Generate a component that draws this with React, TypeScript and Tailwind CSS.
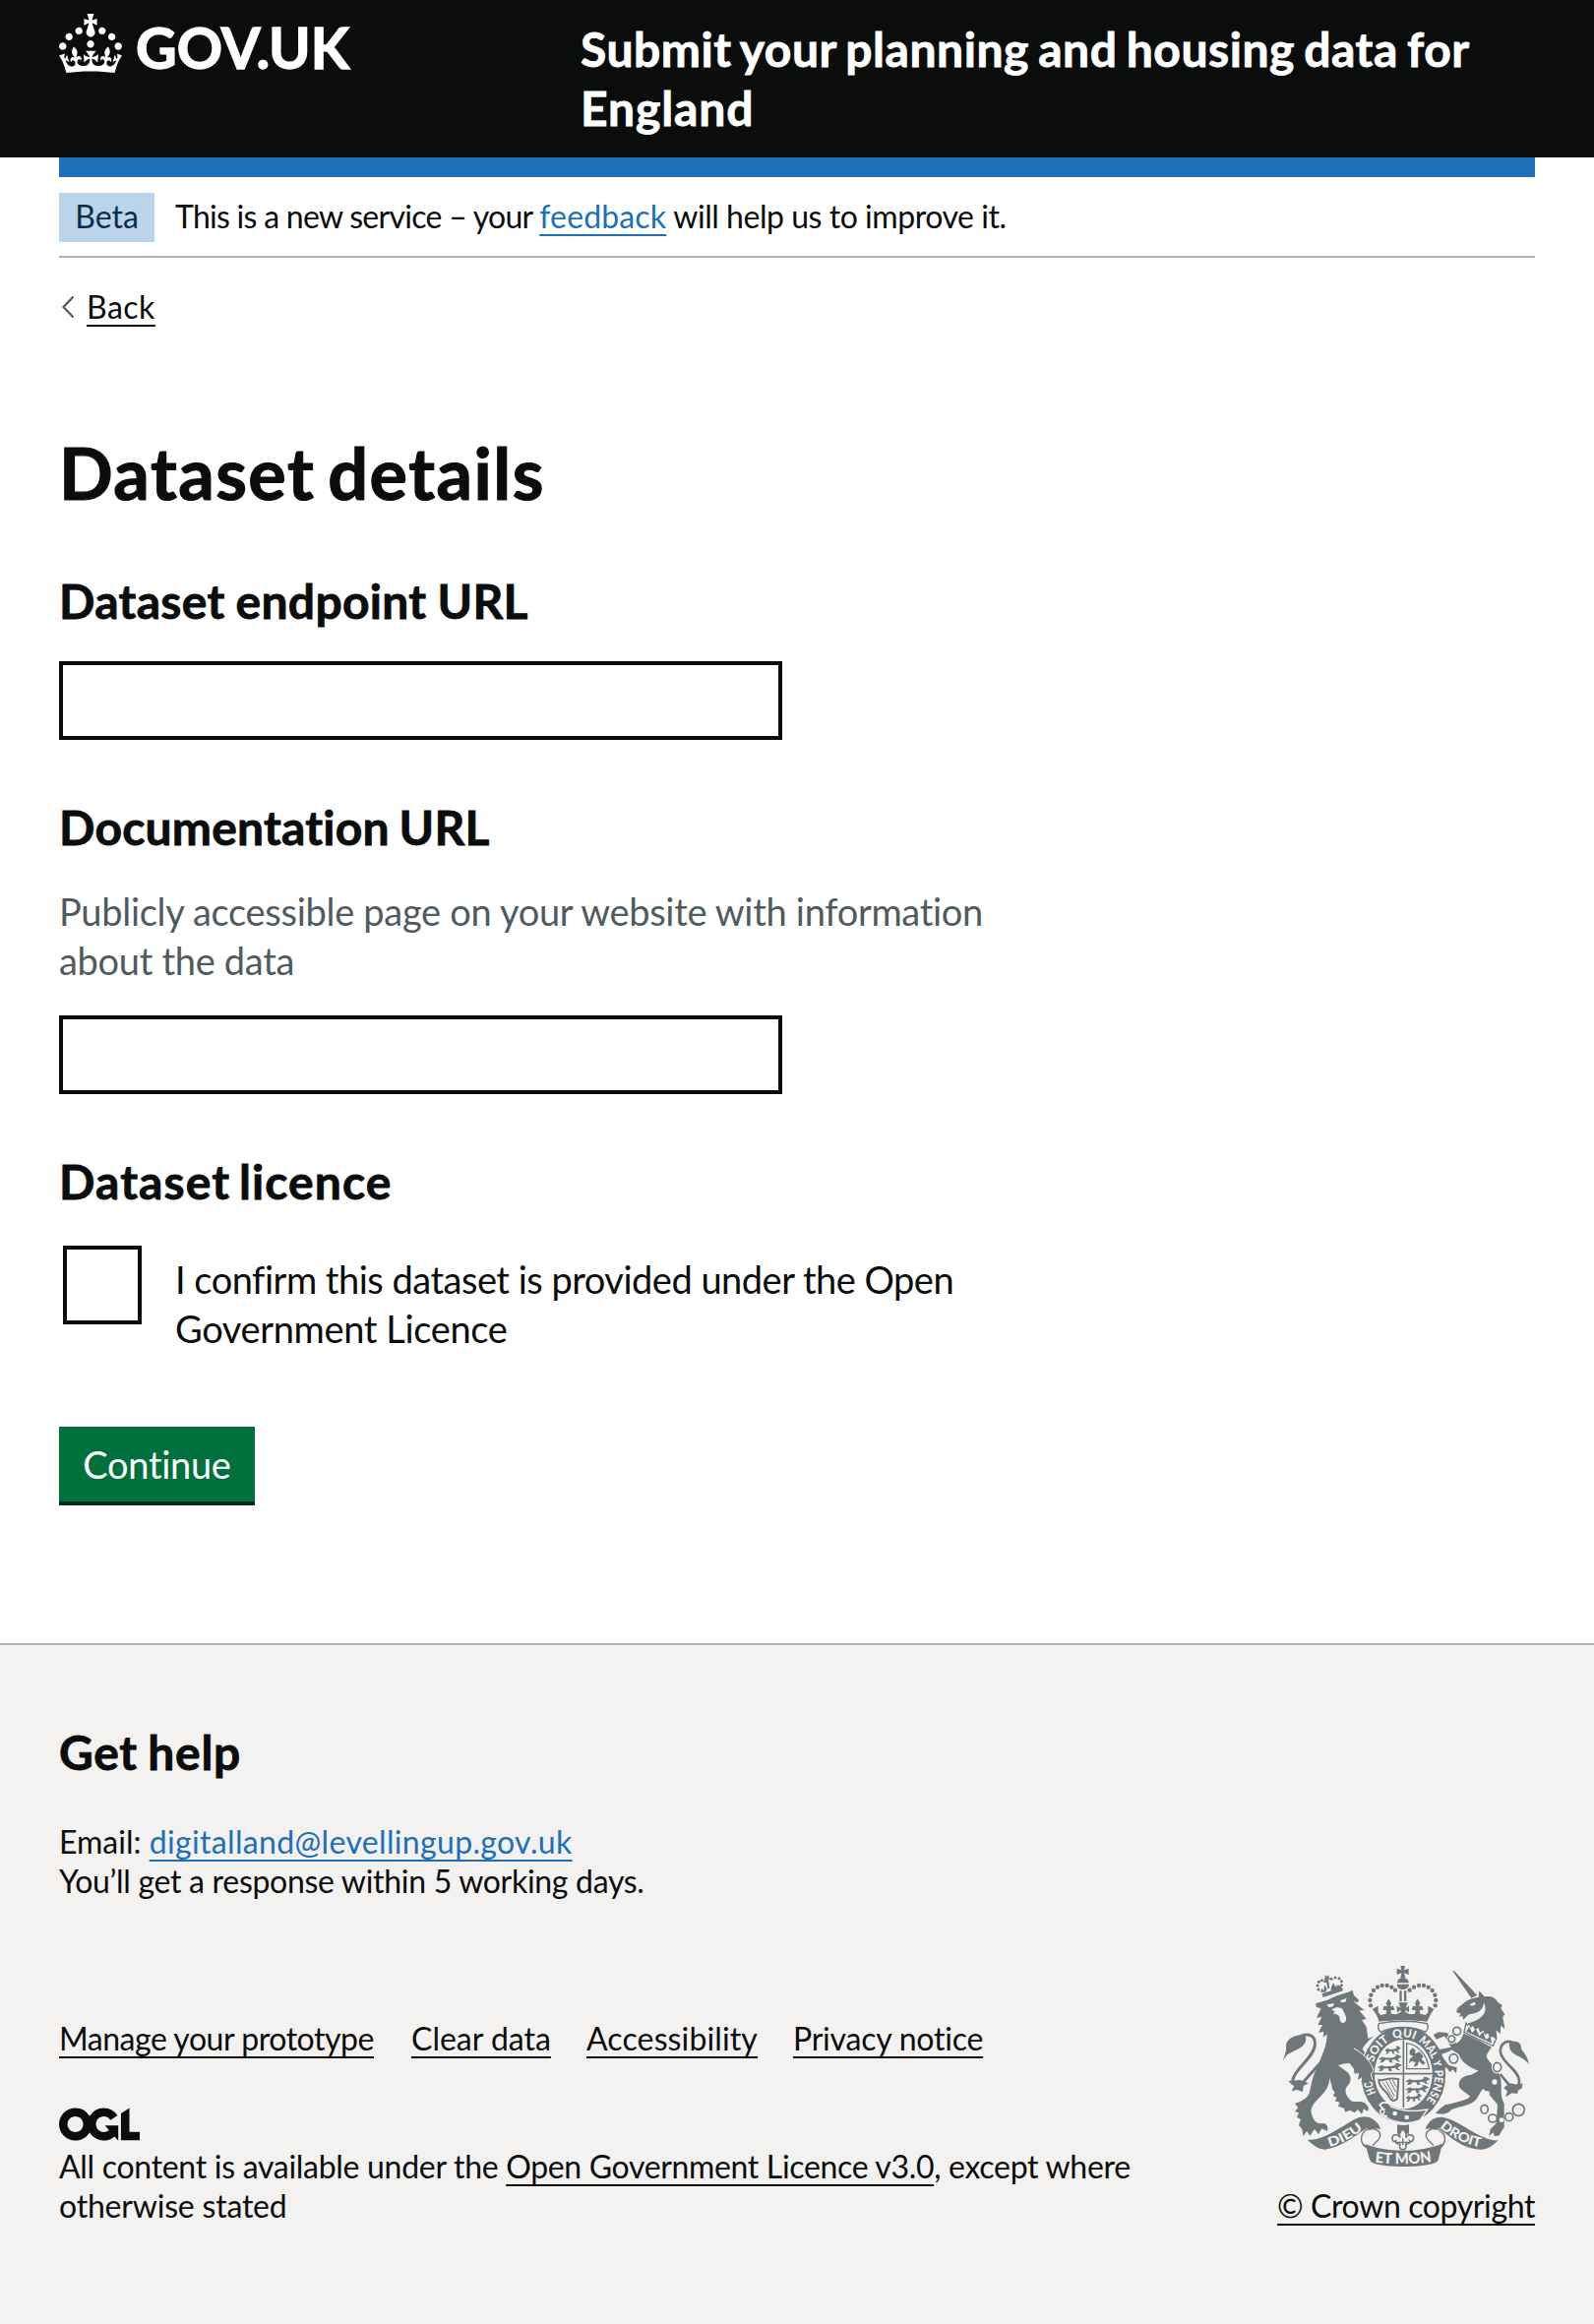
import type { ReactNode } from "react";

const BACKGROUND = "#f3f2f1";
const CREST = "#6f777b";

function Crown() {
  return (
    <svg viewBox="0 0 32 30" width="64" height="60" fill="currentColor" aria-hidden="true">
      <path d="M22.6 10.4c-1 .4-2-.1-2.4-1-.4-.9.1-2 1-2.4.9-.4 2 .1 2.4 1s-.1 2-1 2.4m-5.9 6.7c-.9.4-2-.1-2.4-1-.4-.9.1-2 1-2.4.9-.4 2 .1 2.4 1s-.1 2-1 2.4m10.8-3.7c-1 .4-2-.1-2.4-1-.4-.9.1-2 1-2.4.9-.4 2 .1 2.4 1s0 2-1 2.4m3.3 4.8c-1 .4-2-.1-2.4-1-.4-.9.1-2 1-2.4.9-.4 2 .1 2.4 1s-.1 2-1 2.4M17 4.7l2.3 1.2V2.5l-2.3.7-.2-.2.9-3h-3.4l.9 3-.2.2c-.1.1-2.3-.7-2.3-.7v3.4L15 4.7c.1.1.1.2.2.2l-1.3 4c-.1.2-.1.4-.1.6 0 1.1.8 2 1.9 2.2h.7c1-.2 1.9-1.1 1.9-2.1 0-.2 0-.4-.1-.6l-1.3-4c-.1-.2 0-.2.1-.3m-7.6 5.7c.9.4 2-.1 2.4-1 .4-.9-.1-2-1-2.4-.9-.4-2 .1-2.4 1s0 2 1 2.4m-5 3c.9.4 2-.1 2.4-1 .4-.9-.1-2-1-2.4-.9-.4-2 .1-2.4 1s.1 2 1 2.4m-3.2 4.8c.9.4 2-.1 2.4-1 .4-.9-.1-2-1-2.4-.9-.4-2 .1-2.4 1s0 2 1 2.4m14.8 11c4.4 0 8.6.3 12.3.8 1.1-4.5 2.4-7 3.7-8.8l-2.5-.9c.2 1.3.3 1.9 0 2.7-.4-.4-.8-1.1-1.1-2.3l-1.2 4c.7-.5 1.3-.8 2-.9-1.1 2.5-2.6 3.1-3.5 3-1.1-.2-1.7-1.2-1.5-2.1.3-1.2 1.5-1.5 2.1-.1 1.1-2.3-.8-3-2-2.3 1.9-1.9 2.1-3.5.6-5.6-2.1 1.6-2.1 3.2-1.2 5.5-1.2-1.4-3.2-.6-2.5 1.6.9-1.4 2.1-.5 1.9.8-.2 1.1-1.7 2.1-3.5 1.9-2.7-.2-2.9-2.1-2.9-3.6.7-.1 1.9.5 2.9 1.9l.4-4.3c-1.1 1.1-2.1 1.4-3.2 1.4.4-1.2 2.1-3 2.1-3h-5.4s1.7 1.9 2.1 3c-1.1 0-2.1-.2-3.2-1.4l.4 4.3c1-1.4 2.2-2 2.9-1.9-.1 1.5-.2 3.4-2.9 3.6-1.9.2-3.4-.8-3.5-1.9-.2-1.3 1-2.2 1.9-.8.7-2.3-1.2-3-2.5-1.6.9-2.2.9-3.9-1.2-5.5-1.5 2-1.3 3.7.6 5.6-1.2-.7-3.1 0-2 2.3.6-1.4 1.8-1.1 2.1.1.2.9-.3 1.9-1.5 2.1-.9.2-2.4-.5-3.5-3 .6 0 1.2.3 2 .9l-1.2-4c-.3 1.1-.7 1.9-1.1 2.3-.3-.8-.2-1.4 0-2.7l-2.9.9C1.3 23 2.6 25.5 3.7 30c3.7-.5 7.9-.8 12.3-.8" />
    </svg>
  );
}

function Wordmark() {
  return (
    <svg width="236" height="84" className="-mt-3 ml-2 overflow-visible" fill="currentColor">
      <text
        x="6"
        y="68"
        fontSize="58"
        fontWeight="700"
        textLength="217"
        lengthAdjust="spacingAndGlyphs"
        stroke="currentColor"
        strokeWidth="1.4"
      >
        GOV.UK
      </text>
    </svg>
  );
}

function LicenceMark() {
  return (
    <svg viewBox="0 0 483.2 195.7" width="82" height="34" fill="currentColor" aria-hidden="true">
      <path d="M421.5 142.8V.1l-50.7 32.3v161.1h112.4v-50.7zm-122.3-9.6A47.12 47.12 0 0 1 221 97.8c0-26 21.1-47.1 47.1-47.1 16.7 0 31.4 8.7 39.7 21.8l42.7-27.2A97.63 97.63 0 0 0 268.1 0c-36.5 0-68.3 20.1-85.1 49.7A98 98 0 0 0 97.8 0C43.9 0 0 43.9 0 97.8s43.9 97.8 97.8 97.8c36.5 0 68.3-20.1 85.1-49.7a97.76 97.76 0 0 0 149.6 25.4l19.4 22.2h3v-87.8h-80l24.3 27.5zM97.8 145c-26 0-47.1-21.1-47.1-47.1s21.1-47.1 47.1-47.1 47.1 21.1 47.1 47.1S123.8 145 97.8 145" />
    </svg>
  );
}

const crownPearls: [number, number][] = [
  [339, 175], [337, 159], [340, 143], [348, 129], [360, 119], [374, 114], [389, 114], [403, 119], [414, 128],
  [458, 128], [471, 119], [486, 114], [501, 114], [515, 119], [527, 129], [535, 143], [538, 159], [536, 175],
];

const lionPearls: [number, number][] = [
  [180, 126], [177, 114], [181, 103], [190, 98], [200, 101], [219, 94], [231, 90], [243, 92], [250, 101], [250, 113],
];

const chainRings: [number, number, number, number][] = [
  [602, 253, 12, 12], [586, 277, 10, 10], [592, 337, 13, 14], [725, 363, 12, 14],
  [686, 491, 11, 13], [711, 519, 13, 12], [761, 515, 12, 12], [790, 493, 18, 18],
];

/* Word, distance along the garter, length along the garter. */
const garterWords: [string, number, number][] = [
  ["HO", 22, 40], ["SOIT", 116, 84], ["QUI", 214, 66], ["MAL", 292, 70], ["Y", 368, 20], ["PENSE", 396, 98],
];

/* A passant lion, three of which fill an English quarter. */
const LION_PASSANT =
  "M0 5l6-4 6 3 14-1 6-4-2-4 6 1 7 5-5 3-3 4 5 6-6-1-4-5-7 1 2 7-6-1-1-6-7 0-4 6-6 1 3-7-5-1z";

function RoyalArms() {
  return (
    <svg viewBox="72 54 750 612" width="250" height="204" fill={CREST} aria-hidden="true">
      {/* Lion's tail */}
      <path d="M72 344C78 318 84 312 81 300C80 282 96 270 117 266C138 262 146 270 140 286C134 304 108 312 90 322C80 328 76 336 72 344Z" />
      <path d="M126 268C152 258 172 268 169 296C165 334 108 368 102 400C100 416 114 424 132 410L184 352" fill="none" stroke={CREST} strokeWidth="9" />
      <path d="M100 404L88 404L96 414L106 420L98 436L114 432L132 438L134 420L150 412L124 402Z" />
      {/* Lion's body */}
      <path d="M171 169L207 158L245 140L284 129L288 144L303 158L300 166L286 162L320 190L304 190L326 216L312 219L326 240C328 256 330 262 331 276L350 268C330 284 320 296 314 308C330 330 346 352 348 372L338 384L344 400L330 408L312 404L318 388L304 400L308 376L296 384L298 362L286 366L274 350C262 352 250 352 240 358L268 378C282 392 280 408 268 420C258 432 262 450 278 464C292 474 306 462 320 472C330 478 336 488 330 498L318 490L312 506L300 492L290 502L276 494L262 500L258 488L240 482L244 470L230 466L236 456L224 450L230 440L222 430C222 416 214 404 214 392C214 424 198 440 180 458C164 474 156 486 158 502C164 528 176 538 192 534C204 534 212 544 206 558L190 550L180 568L168 552L154 572L144 558L134 574L130 552L120 540L126 522L114 516L120 502L108 498L118 486L108 474C128 468 146 458 152 442C158 420 160 396 172 372C184 340 206 304 206 262L194 272L196 254L180 258L192 234L178 234L190 210L174 212L188 184L174 180Z" />
      <g fill={BACKGROUND}>
        <path d="M205 172L228 168L224 178L212 181ZM246 160L266 152L262 164L250 166Z" />
        <path d="M220 187L236 180L252 184L258 196L264 210C266 222 260 229 254 228C246 227 244 218 244 208L232 200L224 202L230 194Z" />
      </g>
      <path d="M186 158L276 130" stroke={BACKGROUND} strokeWidth="4" />
      {/* Crown on the lion */}
      <path d="M190 139L252 120L255 130L194 150ZM200 82L206 86L213 82L211 89L216 92L210 96L214 122L208 124L203 98L196 96L200 90ZM186 134L190 122L196 130L198 112L206 124L202 134ZM217 130L220 116L225 106L232 118L240 112L248 118L250 122Z" />
      {lionPearls.map(([x, y]) => (
        <circle key={`${x}-${y}`} cx={x} cy={y} r="4.5" />
      ))}

      {/* Royal crown */}
      <path d="M430 54H444L441 67L455 62V81L441 76L445 90H430L433 76L419 81V62L433 67Z" />
      <path d="M419 106C422 92 432 90 437 90C443 90 453 92 456 106ZM419 110H456C456 122 444 126 437 126C430 126 419 122 419 110Z" />
      <path d="M427 130H434V162H427ZM441 130H448V162H441Z" />
      {crownPearls.map(([x, y]) => (
        <circle key={`${x}-${y}`} cx={x} cy={y} r="6.5" />
      ))}
      <path d="M344 186L362 176L362 196L370 204L386 200L388 190L376 188L380 176L390 178L386 168L394 154L402 168L398 178L408 176L412 188L400 190L402 200L416 202L430 196L432 188L420 196L418 176L430 182L424 166H452L446 182L456 176L456 196L444 188L446 196L460 202L474 200L476 190L464 188L468 176L478 178L474 168L482 154L490 168L486 178L496 176L500 188L488 190L490 200L506 204L514 196L514 176L532 186C522 200 516 214 511 224C470 218 408 218 365 224C360 210 356 200 344 186Z" />

      {/* Garter */}
      <ellipse cx="439" cy="385" rx="108" ry="126" fill="none" stroke={BACKGROUND} strokeWidth="48" />
      <ellipse cx="439" cy="385" rx="108" ry="126" fill="none" stroke={CREST} strokeWidth="41" />
      <path d="M364 230C410 221 466 221 511 230C516 240 512 250 506 256C466 236 410 236 370 256C363 250 360 240 364 230Z" fill={BACKGROUND} stroke={CREST} strokeWidth="4" />
      <defs>
        <path id="garter" d="M366 460A96 114 0 1 1 492 480" />
        <path id="scroll-left" d="M214 606Q268 592 322 546" />
        <path id="scroll-middle" d="M350 653Q438 664 526 651" />
        <path id="scroll-right" d="M548 544Q606 596 676 607" />
      </defs>
      <g fill={BACKGROUND} fontWeight="900" fontSize="36">
        {garterWords.map(([word, offset, length]) => (
          <text key={word}>
            <textPath href="#garter" startOffset={offset} textLength={length} lengthAdjust="spacingAndGlyphs">
              {word}
            </textPath>
          </text>
        ))}
      </g>
      <path d="M366 478C378 466 394 468 402 484C442 500 480 498 512 492L490 524C450 542 402 530 374 508C382 502 384 496 376 490Z" stroke={BACKGROUND} strokeWidth="4" />
      <path d="M392 472C368 466 362 480 378 490C362 492 366 512 390 512" fill="none" stroke={BACKGROUND} strokeWidth="5" />
      <circle cx="413" cy="504" r="7" fill={BACKGROUND} />
      <circle cx="449" cy="516" r="7" fill={BACKGROUND} />
      {/* Lion's forearm over the garter */}
      <path d="M288 306C312 316 344 350 348 374L340 384L345 402L330 412L310 408L316 390L300 402L304 376L290 384L284 340Z" />
      <path d="M288 306C312 316 344 350 348 374L340 384L345 402" fill="none" stroke={BACKGROUND} strokeWidth="3" />

      {/* Shield */}
      <ellipse cx="439" cy="382" rx="88" ry="103" fill={BACKGROUND} />
      <path d="M439 280V486M350 383H528" stroke={CREST} strokeWidth="5" />
      <path d="M449 368V290C484 294 512 326 517 368Z" fill="none" stroke={CREST} strokeWidth="4" />
      <path d="M458 312L468 304L476 312L474 322L488 316L500 330L494 338L506 350L498 356L486 344L482 358L470 362L476 348L464 344L456 352L458 338L468 330L458 324Z" />
      <g>
        <path d={LION_PASSANT} transform="translate(384 304) scale(1.1 1.2)" />
        <path d={LION_PASSANT} transform="translate(366 330) scale(1.6 1.2)" />
        <path d={LION_PASSANT} transform="translate(362 356) scale(1.7 1.2)" />
        <path d={LION_PASSANT} transform="translate(448 398) scale(1.7 1.2)" />
        <path d={LION_PASSANT} transform="translate(448 423) scale(1.6 1.2)" />
        <path d={LION_PASSANT} transform="translate(448 449) scale(1.1 1.2)" />
      </g>
      <path d="M364 402C380 406 390 392 424 400L420 458C412 470 402 466 396 454C388 432 364 430 364 402Z" fill="none" stroke={CREST} strokeWidth="6" />
      <path d="M376 408L408 460M386 406L412 452M396 402L416 438M406 402L418 424" stroke={CREST} strokeWidth="3" />

      {/* Unicorn's tail */}
      <path d="M762 288C784 278 800 290 798 306C806 320 816 326 822 354C806 334 790 332 776 322C764 314 760 300 762 288Z" />
      <path d="M776 290C752 276 732 294 735 318C740 352 790 370 792 404C792 424 774 428 762 418L734 384" fill="none" stroke={CREST} strokeWidth="8" />
      <path d="M786 416L802 412L800 428L790 432L786 444L770 442L750 454L756 436L744 426L764 412Z" />
      {/* Unicorn */}
      <path d="M588 68L596 71L664 144L646 152Z" />
      <path d="M601 196C600 186 608 178 618 172C630 160 646 152 668 150L670 130L686 148C704 144 720 150 726 164L740 174L736 184L748 202L742 210L748 246L736 236L734 262L722 250L724 276C700 266 660 246 636 230C650 222 660 210 664 196C652 202 640 198 632 208L622 218L618 206L608 210L614 200Z" />
      <path d="M664 196C676 190 684 178 684 166C694 186 688 204 668 216C654 224 642 228 636 230C652 220 660 208 664 196ZM640 172L656 164L660 172L648 176Z" fill={BACKGROUND} />
      <path d="M630 228L634 234L640 230L644 240L652 234L658 246L668 240L674 254L684 248L688 262L698 256L702 270L712 268L722 276L712 298C684 284 648 270 624 256Z" fill={BACKGROUND} stroke={CREST} strokeWidth="4" />
      <path d="M630 254L640 240L648 258L660 246L670 268L682 256L690 278L704 270L708 290Z" />
      <path d="M622 260C652 272 684 288 708 302C702 312 694 318 692 330C700 352 726 366 734 392C742 424 730 446 746 474V546L730 572L716 572L712 562L700 574L704 552L722 534L726 478C712 456 694 442 682 428C666 446 668 466 634 478C608 486 586 488 578 500L560 506L536 504L550 490L566 478C600 470 632 464 642 452C632 440 610 434 608 418C608 398 622 388 646 386L668 374C640 364 616 348 608 324L586 310C578 318 560 320 552 326L566 342L576 356L602 364L600 382L590 370L580 378L572 366L558 360L548 336C534 330 538 314 552 308L584 302L564 268L540 278L530 264L546 256L572 258L588 276L600 290C610 286 618 274 622 260Z" />
      <g fill="none" stroke={BACKGROUND} strokeWidth="11">
        {chainRings.slice(0, 4).map(([cx, cy, rx, ry]) => (
          <ellipse key={`${cx}-${cy}`} cx={cx} cy={cy} rx={rx} ry={ry} />
        ))}
      </g>
      <g fill={BACKGROUND} stroke={CREST} strokeWidth="5">
        {chainRings.map(([cx, cy, rx, ry]) => (
          <ellipse key={`${cx}-${cy}`} cx={cx} cy={cy} rx={rx} ry={ry} />
        ))}
      </g>
      <g fill={BACKGROUND}>
        <circle cx="717" cy="408" r="8" />
        <circle cx="694" cy="443" r="8" />
        <circle cx="738" cy="524" r="7" />
      </g>

      {/* Badge below the garter */}
      <path d="M420 538C432 541 446 541 456 538V566H420Z" />
      <path d="M437 550C446 562 450 568 446 578C452 566 470 566 470 580C470 588 462 592 458 588C460 598 448 594 446 598C450 612 442 614 437 614C432 614 424 612 429 598C424 594 414 598 416 588C410 592 405 588 405 580C405 566 424 566 429 578C424 568 428 562 437 550Z" fill={BACKGROUND} stroke={CREST} strokeWidth="5" />
      <path d="M420 592H455M437 580V600" stroke={CREST} strokeWidth="4" />

      {/* Motto scroll */}
      <path d="M146 584C200 590 268 528 304 516C336 506 362 528 370 552C340 546 318 560 312 580C310 596 322 604 330 606L334 612C300 606 306 560 340 554L326 550C300 566 252 608 200 614C176 612 164 600 146 584Z" />
      <path d="M728 586C676 590 610 524 560 516C534 512 512 530 506 552C534 546 556 560 564 578C566 594 554 604 548 606L542 614C578 606 570 560 538 554L548 548C580 576 620 612 676 614C704 612 712 600 728 586Z" />
      <path d="M330 552C306 562 304 596 326 604M546 552C570 562 572 596 550 604M330 552C352 548 366 556 368 568C370 586 350 592 346 602M546 552C524 548 510 556 508 568C506 586 526 592 530 602" fill="none" stroke={CREST} strokeWidth="4" />
      <path d="M324 598C390 624 490 624 556 596C554 612 550 630 544 648C528 672 350 672 338 648C330 632 328 614 324 598Z" />
      <g fill={BACKGROUND} fontWeight="900">
        <text fontSize="40">
          <textPath href="#scroll-left" textLength="116" lengthAdjust="spacingAndGlyphs">DIEU</textPath>
        </text>
        <text fontSize="46">
          <textPath href="#scroll-middle" startOffset="2" textLength="174" lengthAdjust="spacingAndGlyphs">ET MON</textPath>
        </text>
        <text fontSize="40">
          <textPath href="#scroll-right" startOffset="2" textLength="140" lengthAdjust="spacingAndGlyphs">DROIT</textPath>
        </text>
      </g>
    </svg>
  );
}

function Link({ children, className = "" }: { children: ReactNode; className?: string }) {
  return (
    <a href="#" className={`underline decoration-2 underline-offset-[6px] ${className}`}>
      {children}
    </a>
  );
}

function Header() {
  return (
    <header className="h-40 bg-[#0b0c0c] px-15 text-white">
      <div className="flex">
        <a href="#" aria-label="GOV.UK" className="flex w-[530px] shrink-0 pt-3.5">
          <Crown />
          <Wordmark />
        </a>
        <p className="pt-5 text-5xl leading-[60px] font-bold tracking-[0.55px] whitespace-nowrap [-webkit-text-stroke:0.8px_currentColor] [word-spacing:-3px]">
          Submit your planning and housing data for
          <br />
          <span className="tracking-[0.9px]">England</span>
        </p>
      </div>
    </header>
  );
}

function PhaseBanner() {
  return (
    <div className="flex h-[82px] gap-[21px] border-b-2 border-[#b1b4b6] pt-4 text-[32px]">
      <strong className="h-[50px] w-[97px] bg-[#bbd4ea] text-center leading-[47px] font-normal text-[#0c2d4a]">
        Beta
      </strong>
      <p className="leading-[47px] whitespace-pre">
        <span className="tracking-[-0.72px]">This is a new service – your </span>
        <Link className="tracking-[0.15px] text-[#1d70b8]">feedback</Link>
        <span className="tracking-[-0.46px]"> will help us to improve it.</span>
      </p>
    </div>
  );
}

function Heading({ children, className }: { children: ReactNode; className: string }) {
  return (
    <h2 className={`text-5xl leading-[60px] font-bold [-webkit-text-stroke:0.8px_currentColor] ${className}`}>
      {children}
    </h2>
  );
}

function TextInput({ label }: { label: string }) {
  return (
    <input
      type="text"
      aria-label={label}
      className="mt-[31px] block h-20 w-[735px] border-4 border-[#0b0c0c] bg-white px-2 text-[38px]"
    />
  );
}

function DatasetForm() {
  return (
    <main>
      <h1 className="mt-[110px] text-7xl leading-[78px] font-bold tracking-[1.5px] [-webkit-text-stroke:1.2px_currentColor] [word-spacing:-6px]">
        Dataset details
      </h1>

      <Heading className="mt-[62px] tracking-[0.3px] [word-spacing:-1px]">Dataset endpoint URL</Heading>
      <TextInput label="Dataset endpoint URL" />

      <Heading className="mt-[59px] tracking-[0.2px] [word-spacing:-2px]">Documentation URL</Heading>
      <p className="mt-[30px] text-[38px] leading-[50px] tracking-[-0.3px] text-[#505a5f]">
        Publicly accessible page on your website with information
        <br />
        about the data
      </p>
      <TextInput label="Documentation URL" />

      <Heading className="mt-[59px] tracking-[1.1px] [word-spacing:-4px]">Dataset licence</Heading>
      <label className="mt-[35px] flex h-[108px] pl-1">
        <input type="checkbox" className="size-20 shrink-0 appearance-none border-4 border-[#0b0c0c] bg-white" />
        <span className="pt-[9px] pl-[34px] text-[38px] leading-[50px] tracking-[-0.5px]">
          I confirm this dataset is provided under the Open
          <br />
          <span className="tracking-[-0.36px]">Government Licence</span>
        </span>
      </label>

      <button
        type="button"
        className="mt-[76px] block h-20 w-[199px] border-b-4 border-[#002d18] bg-[#00703c] text-[38px] leading-[75px] tracking-[-0.3px] text-white"
      >
        Continue
      </button>
    </main>
  );
}

function Footer() {
  return (
    <footer className="mt-[140px] h-[692px] border-t-2 border-[#b1b4b6] bg-[#f3f2f1] px-15 pt-[79px] text-[32px] leading-10">
      <Heading className="tracking-[0.7px] [word-spacing:-2px]">Get help</Heading>
      <p className="mt-[41px]">
        Email: <Link className="tracking-[0.34px] text-[#1d70b8]">digitalland@levellingup.gov.uk</Link>
        <br />
        <span className="tracking-[-0.3px]">You’ll get a response within 5 working days.</span>
      </p>

      <div className="mt-[66px] flex items-end justify-between">
        <div>
          <nav className="flex">
            <Link className="w-[358px] tracking-[-0.46px]">Manage your prototype</Link>
            <Link className="w-[178px]">Clear data</Link>
            <Link className="w-[210px] tracking-[0.13px]">Accessibility</Link>
            <Link className="tracking-[-0.22px]">Privacy notice</Link>
          </nav>
          <div className="mt-[50px] h-[34px]">
            <LicenceMark />
          </div>
          <p className="mt-[6px] whitespace-nowrap">
            <span className="tracking-[-0.29px]">
              All content is available under the <Link className="tracking-[-0.34px]">Open Government Licence v3.0</Link>,
              except where
            </span>
            <br />
            <span className="tracking-[-0.2px]">otherwise stated</span>
          </p>
        </div>
        <div className="flex flex-col items-end">
          <div className="mr-[6px] mb-5 h-[204px]">
            <RoyalArms />
          </div>
          <Link className="tracking-[-0.38px]">© Crown copyright</Link>
        </div>
      </div>
    </footer>
  );
}

export default function App() {
  return (
    <div className="bg-white font-['Lato','Open_Sans',sans-serif] text-[#0b0c0c] [font-variant-ligatures:none]">
      <Header />
      <div className="px-15">
        <div className="h-5 bg-[#1d70b8]" />
        <PhaseBanner />
        <div className="mt-[30px] flex h-[39px] text-[32px] leading-10">
          <svg width="28" height="40" className="shrink-0" aria-hidden="true">
            <path d="M14.5 9.5L4.5 20L14.5 30.5" fill="none" stroke="#505a5f" strokeWidth="2.2" />
          </svg>
          <Link className="tracking-[0.5px]">Back</Link>
        </div>
        <DatasetForm />
      </div>
      <Footer />
    </div>
  );
}
